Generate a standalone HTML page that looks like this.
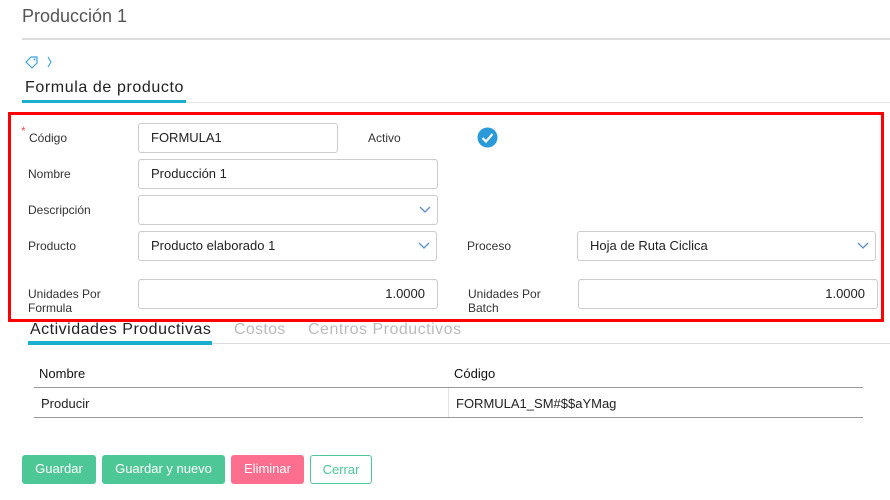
<!DOCTYPE html>
<html><head><meta charset="utf-8"><style>
*{box-sizing:border-box;margin:0;padding:0}
body{width:890px;height:500px;background:#fff;font-family:"Liberation Sans",sans-serif;position:relative;overflow:hidden;color:#333}
.a{position:absolute}
.lbl{position:absolute;font-size:12px;color:#333;line-height:14px}
.inp{position:absolute;border:1px solid #ccc;border-radius:3px;height:30px;font-size:13px;color:#222;padding:0 12px;line-height:28px;background:#fff}
.chev{position:absolute;right:6px;top:10px}
.btn{position:absolute;top:455px;height:29px;border-radius:3px;font-size:13px;color:#fff;line-height:28px;text-align:center}
</style></head><body>
<div class="a" style="left:22px;top:6px;font-size:18px;color:#555">Producción 1</div>
<div class="a" style="left:22px;top:38px;width:868px;height:2px;background:#ddd"></div>
<svg class="a" style="left:24px;top:55px" width="32" height="14" viewBox="0 0 32 14"><path d="M2 7 L7 2 L13 2 L13 8 L8 13 Z" fill="none" stroke="#3a9ee0" stroke-width="1.2" stroke-linejoin="round"/><circle cx="10.5" cy="4.5" r="1" fill="#3a9ee0"/><path d="M24 2 L27 7 L24 12" fill="none" stroke="#3a9ee0" stroke-width="1.1"/></svg>
<div class="a" style="left:25px;top:79px;font-size:16px;color:#222;letter-spacing:0.6px">Formula de producto</div>
<div class="a" style="left:22px;top:100px;width:164px;height:3px;background:#1aaecf"></div>
<div class="a" style="left:186px;top:102px;width:704px;height:1px;background:#e3e3e3"></div>
<div class="a" style="left:8px;top:112px;width:876px;height:210px;border:3px solid #f00"></div>
<div class="a" style="left:21px;top:124px;color:#e55;font-size:12px">*</div>
<div class="lbl" style="left:29px;top:131px">Código</div>
<div class="inp" style="left:138px;top:123px;width:200px">FORMULA1</div>
<div class="lbl" style="left:368px;top:131px">Activo</div>
<svg class="a" style="left:477px;top:127px" width="21" height="21"><circle cx="10.5" cy="10.5" r="10" fill="#2a9ad8"/><path d="M5.5 11 L9 14.5 L15.5 7" fill="none" stroke="#fff" stroke-width="2.2"/></svg>
<div class="lbl" style="left:28px;top:167px">Nombre</div>
<div class="inp" style="left:138px;top:159px;width:300px">Producción 1</div>
<div class="lbl" style="left:28px;top:203px">Descripción</div>
<div class="inp" style="left:138px;top:195px;width:300px"><svg class="chev" width="12" height="8"><path d="M1 1 L6 6 L11 1" fill="none" stroke="#5b8ec7" stroke-width="1.3"/></svg></div>
<div class="lbl" style="left:28px;top:239px">Producto</div>
<div class="inp" style="left:138px;top:231px;width:299px">Producto elaborado 1<svg class="chev" width="12" height="8"><path d="M1 1 L6 6 L11 1" fill="none" stroke="#5b8ec7" stroke-width="1.3"/></svg></div>
<div class="lbl" style="left:467px;top:239px">Proceso</div>
<div class="inp" style="left:577px;top:231px;width:299px">Hoja de Ruta Ciclica<svg class="chev" width="12" height="8"><path d="M1 1 L6 6 L11 1" fill="none" stroke="#5b8ec7" stroke-width="1.3"/></svg></div>
<div class="lbl" style="left:28px;top:287px">Unidades Por<br>Formula</div>
<div class="inp" style="left:138px;top:279px;width:300px;text-align:right">1.0000</div>
<div class="lbl" style="left:468px;top:287px">Unidades Por<br>Batch</div>
<div class="inp" style="left:578px;top:279px;width:300px;text-align:right">1.0000</div>
<div class="a" style="left:30px;top:321px;font-size:16px;color:#222;letter-spacing:0.5px">Actividades Productivas</div>
<div class="a" style="left:234px;top:321px;font-size:16px;color:#bbb;letter-spacing:0.3px">Costos</div>
<div class="a" style="left:308px;top:321px;font-size:16px;color:#bbb;letter-spacing:0.5px">Centros Productivos</div>
<div class="a" style="left:28px;top:341px;width:184px;height:4px;background:#1aaecf"></div>
<div class="a" style="left:212px;top:343px;width:678px;height:1px;background:#ddd"></div>
<div class="a" style="left:39px;top:366px;font-size:13px;color:#111">Nombre</div>
<div class="a" style="left:454px;top:366px;font-size:13px;color:#111">Código</div>
<div class="a" style="left:34px;top:387px;width:829px;height:1px;background:#999"></div>
<div class="a" style="left:448px;top:388px;width:1px;height:29px;background:#e3e3e3"></div>
<div class="a" style="left:41px;top:396px;font-size:13px;color:#222">Producir</div>
<div class="a" style="left:456px;top:396px;font-size:13px;color:#222">FORMULA1_SM#$$aYMag</div>
<div class="a" style="left:34px;top:417px;width:829px;height:1px;background:#999"></div>
<div class="btn" style="left:22px;width:74px;background:#4ec796">Guardar</div>
<div class="btn" style="left:102px;width:123px;background:#4ec796">Guardar y nuevo</div>
<div class="btn" style="left:231px;width:73px;background:#fe6f8f">Eliminar</div>
<div class="btn" style="left:310px;width:62px;border:1px solid #4ec796;color:#4ec796;background:#fff;line-height:27px">Cerrar</div>
</body></html>
